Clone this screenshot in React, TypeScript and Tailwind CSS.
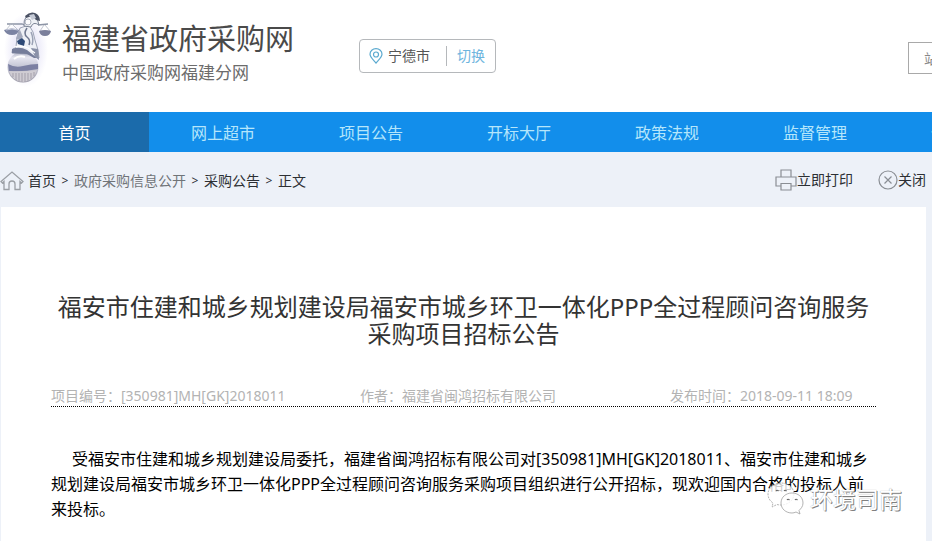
type NavItem = {
  label: string;
  active?: boolean;
};

const navItems: NavItem[] = [
  { label: '首页', active: true },
  { label: '网上超市' },
  { label: '项目公告' },
  { label: '开标大厅' },
  { label: '政策法规' },
  { label: '监督管理' },
  { label: '信用信息' },
];

function LogoFigure() {
  return (
    <svg width="56" height="80" viewBox="0 0 56 80" aria-hidden="true" className="shrink-0">
      <defs>
        <radialGradient id="halo">
          <stop offset="0.6" stopColor="#efeefa" />
          <stop offset="1" stopColor="#ffffff" />
        </radialGradient>
        <linearGradient id="ball" x1="0" y1="0" x2="0" y2="1">
          <stop offset="0" stopColor="#a9acc0" />
          <stop offset="0.2" stopColor="#e6e6f0" />
          <stop offset="0.45" stopColor="#c9cad9" />
          <stop offset="1" stopColor="#9c9aa8" />
        </linearGradient>
      </defs>
      <ellipse cx="26" cy="42" rx="22" ry="37" fill="url(#halo)" />
      {/* sphere */}
      <circle cx="23" cy="59" r="15.500" fill="url(#ball)" />
      <path d="M8 56q7 4 15 2t15-2v5q-15 3-29 2z" fill="#7c80a3" />
      <path d="M9 63q14 1 28-1-3 11-14 12-11-1-14-11z" fill="#cfccd3" />
      <path d="M13 65v4M16 65v7M19 65v8M22 65v9M25 65v9M28 65v8M31 65v6M34 64v4" stroke="#a39fab" strokeWidth="1" />
      <path d="M14 51q5-4 11-2" stroke="#fff" strokeWidth="2" fill="none" />
      {/* seated figure */}
      <path d="M20 20l9-3 4 7 2 8 3 10 1 8-4-1-6-3-17-1q-1-4 4-6 0-10 4-19z" fill="#eef0f6" stroke="#8990a4" strokeWidth="0.8" />
      <path d="M20 22q-3 4-4 9l4 1 3-3z" fill="#a3a9bc" />
      <path d="M17 33l5-3 3 3-1 5-6-2z" fill="#2e4a76" />
      <path d="M27 20q-4 6 0 9t2 8" fill="none" stroke="#6f7890" strokeWidth="1.500" />
      <path d="M31 24q3 7 1 13" fill="none" stroke="#9aa1b5" strokeWidth="1.500" />
      <path d="M12 41q8-3 15 1l10 8-3 0-7-4-15-1z" fill="#757d9a" />
      <path d="M31 40l7 1 1 11-4-3z" fill="#8a91a8" />
      <path d="M14 39q8-2 14 1l7 5" fill="none" stroke="#fff" strokeWidth="1.200" />
      {/* arms, head and scales */}
      <path d="M7 16h15l5 2M38 17l10-1" fill="none" stroke="#8d95a6" strokeWidth="1.300" />
      <path d="M24 18q-1-12 10-11 4 3 5 10-6-4-8 2z" fill="#eff1f6" stroke="#7d8597" strokeWidth="1" />
      <path d="M25 8q5-5 10-3 5 2 5 8l-4-1-4-4-6 2z" fill="#4a5163" />
      <path d="M29 7l5-1 2 4-4 2z" fill="#c5cad6" />
      <circle cx="28" cy="14" r="3" fill="#fbfbfd" stroke="#8b92a3" strokeWidth="0.7" />
      <path d="M11 16l-5 6M12 16l6 6M44 17l-4 6M45 17l5 6" stroke="#b3b8c5" strokeWidth="0.8" />
      <path d="M4 22q8-3 15 0-1 5-7 5-6 0-8-5z" fill="#7b83a2" />
      <path d="M6 22q6-2 12 0" fill="none" stroke="#c9cede" />
      <path d="M39 23q6-2 12 0-1 5-6 5t-6-5z" fill="#7b7f9b" />
    </svg>
  );
}

function PinIcon() {
  return (
    <svg width="14" height="16" viewBox="0 0 14 16" fill="none" stroke="#5aa9cf" strokeWidth="1.2" aria-hidden="true">
      <path d="M7 15C4 11.500 1 9 1 6.200a6 5.500 0 0 1 12 0C13 9 10 11.500 7 15z" />
      <circle cx="7" cy="6.500" r="2.500" />
    </svg>
  );
}

function HomeIcon() {
  return (
    <svg width="24" height="20" viewBox="0 0 24 20" fill="none" stroke="#9b9fa5" strokeWidth="1.300" aria-hidden="true">
      <path d="M4 10.500L2.500 12 1 10.500 12 1l11 9.500L21.500 12 20 10.500V18.500h-5V13q0-3-3-3t-3 3v5.500H4z" />
    </svg>
  );
}

function PrinterIcon() {
  return (
    <svg width="22" height="22" viewBox="0 0 22 22" fill="none" stroke="#8a8e94" strokeWidth="1.200" aria-hidden="true">
      <path d="M6 8V1h10v7M6 17H1V8h20v9h-5M6 14.500h10V21H6z" />
    </svg>
  );
}

function CloseIcon() {
  return (
    <svg width="20" height="20" viewBox="0 0 20 20" fill="none" stroke="#8a8e94" strokeWidth="1.200" aria-hidden="true">
      <circle cx="10" cy="10" r="9" />
      <path d="M6.500 6.500l7 7M13.500 6.500l-7 7" />
    </svg>
  );
}

function ChatIcon() {
  return (
    <svg width="38" height="34" viewBox="0 0 38 34" fill="#fff" fillOpacity="0.800" stroke="#a0a0a0" strokeWidth="0.800" aria-hidden="true">
      <path d="M14 1C7 1 1 6 1 12c0 4 2 7 5 9l-1 4 5-2.500q2 .5 4 .5c7 0 13-5 13-11S21 1 14 1z" strokeDasharray="2 1" />
      <path d="M25 11c-6 0-11 4-11 10s5 10 11 10q2 0 4-1l4 2-1-3.500c2-2 4-4 4-7.500 0-6-5-10-11-10z" />
      <path d="M9 9q1-1.500 2.500 0M17 9q1-1.500 2.500 0M20 18q1-1.500 2.500 0M28 18q1-1.500 2.500 0" fill="none" stroke="#666" strokeWidth="1.200" />
    </svg>
  );
}

function Logo() {
  return (
    <div className="flex w-[294px] shrink-0 gap-[6px] pt-2">
      <LogoFigure />
      <div className="pt-3 whitespace-nowrap">
        <h1 className="text-[29px] leading-[38px] text-[#4a4a4a]">福建省政府采购网</h1>
        <p className="text-[17px] leading-[30px] text-[#6c6c6c]">中国政府采购网福建分网</p>
      </div>
    </div>
  );
}

function Header() {
  return (
    <header className="flex h-28 items-start overflow-hidden bg-white">
      <Logo />

      <div className="mt-[39px] ml-[65px] flex h-[34px] w-[137px] shrink-0 items-center rounded-sm border border-[#b5b8bb] pl-[9px] text-sm">
        <PinIcon />
        <span className="ml-[5px] text-[#555]">宁德市</span>
        <button type="button" className="ml-4 border-l border-[#b5b8bb] pl-[10px] text-[#6db5de]">
          切换
        </button>
      </div>

      <input
        type="search"
        aria-label="站内搜索"
        placeholder="站内搜索"
        className="mt-[42px] -mr-[216px] ml-auto h-8 w-60 shrink-0 border border-[#a9a9a9] px-[15px] text-sm placeholder:text-[#888]"
      />
    </header>
  );
}

function Breadcrumb() {
  return (
    <div className="flex h-[55px] items-center justify-between pr-[6px] text-sm text-[#2c2f33]">
      <nav aria-label="当前位置" className="flex items-center gap-1 pt-[2px]">
        <HomeIcon />
        <a href="#">首页</a>
        <span className="w-[10px] text-center text-xs">&gt;</span>
        <a href="#" className="text-[#707478]">政府采购信息公开</a>
        <span className="w-[10px] text-center text-xs">&gt;</span>
        <a href="#">采购公告</a>
        <span className="w-[10px] text-center text-xs">&gt;</span>
        <span>正文</span>
      </nav>

      <div className="flex gap-[25px]">
        <button type="button" className="flex items-center">
          <PrinterIcon />
          立即打印
        </button>
        <button type="button" className="flex items-center">
          <CloseIcon />
          关闭
        </button>
      </div>
    </div>
  );
}

function Article() {
  return (
    <article className="relative mr-[6px] ml-px flex-1 bg-white px-[50px] pt-[86px]">
      <h2 className="text-center text-2xl leading-[27px] text-[#333]">
        福安市住建和城乡规划建设局福安市城乡环卫一体化PPP全过程顾问咨询服务采购项目招标公告
      </h2>

      <div className="mt-[38px] grid grid-cols-[309fr_310fr_206fr] border-b border-dotted border-black text-sm leading-[21px] text-[#b3b3b3]">
        <span>项目编号：[350981]MH[GK]2018011</span>
        <span>作者：福建省闽鸿招标有限公司</span>
        <span>发布时间：2018-09-11 18:09</span>
      </div>

      <p className="mt-10 indent-[21px] text-base leading-[25px] text-black">
        受福安市住建和城乡规划建设局委托，福建省闽鸿招标有限公司对[350981]MH[GK]2018011、福安市住建和城乡规划建设局福安市城乡环卫一体化PPP全过程顾问咨询服务采购项目组织进行公开招标，现欢迎国内合格的投标人前来投标。
      </p>

      <div className="absolute right-6 bottom-6 flex items-center gap-[5px]">
        <ChatIcon />
        <span className="text-[23px] leading-9 text-white [text-shadow:1px_1px_0_#808080,0_0_1px_#999]">
          环境司南
        </span>
      </div>
    </article>
  );
}

export default function App() {
  return (
    <div className="flex min-h-screen flex-col overflow-hidden bg-[#edf1f8] font-['Noto_Sans','Noto_Sans_CJK_SC',sans-serif]">
      <Header />

      <nav className="flex h-10 overflow-hidden bg-[#128eeb] pt-px">
        {navItems.map((item) => (
          <a
            key={item.label}
            href="#"
            className={
              item.active
                ? '-mt-px flex w-[149px] shrink-0 items-center justify-center bg-[#1b6bab] pt-px text-white'
                : 'flex w-37 shrink-0 items-center justify-center text-[#b5e6fb]'
            }
          >
            {item.label}
          </a>
        ))}
      </nav>

      <Breadcrumb />
      <Article />
    </div>
  );
}
